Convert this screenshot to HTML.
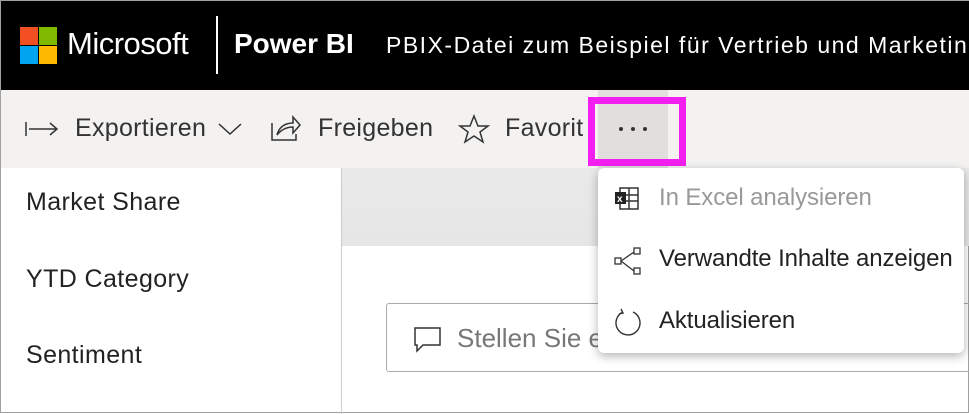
<!DOCTYPE html>
<html><head><style>
*{margin:0;padding:0;box-sizing:border-box}
body{width:969px;height:413px;position:relative;overflow:hidden;background:#fff;font-family:"Segoe UI","Liberation Sans",sans-serif;border:1px solid #a0a0a0}
.abs{position:absolute}
.hdr{left:0;top:0;width:969px;height:89px;background:#000}
.tb{left:0;top:89px;width:969px;height:78px;background:#f3f2f1}
.t{position:absolute;white-space:nowrap}
</style></head><body>
<div class="abs hdr"></div>
<div class="abs" style="left:19px;top:26px;width:18px;height:18px;background:#f25022"></div>
<div class="abs" style="left:38px;top:26px;width:18px;height:18px;background:#7fba00"></div>
<div class="abs" style="left:19px;top:45px;width:18px;height:18px;background:#00a4ef"></div>
<div class="abs" style="left:38px;top:45px;width:18px;height:18px;background:#ffb900"></div>
<div class="t" style="left:66px;top:25px;color:#fff;font-size:31px;letter-spacing:-0.5px">Microsoft</div>
<div class="abs" style="left:215px;top:15px;width:2px;height:58px;background:#fff"></div>
<div class="t" style="left:233px;top:27px;color:#fff;font-size:28px;font-weight:bold">Power BI</div>
<div class="t" style="left:385px;top:31px;color:#fff;font-size:23px;letter-spacing:1.5px">PBIX-Datei zum Beispiel für Vertrieb und Marketing</div>
<div class="abs tb"></div>
<div class="abs" style="left:597px;top:89px;width:70px;height:78px;background:#e1dfdd"></div>
<div class="abs" style="left:587px;top:96px;width:98px;height:69px;border:7px solid #f31ff0"></div>
<div class="abs" style="left:618px;top:126px;width:4px;height:4px;border-radius:2px;background:#333"></div>
<div class="abs" style="left:630px;top:126px;width:4px;height:4px;border-radius:2px;background:#333"></div>
<div class="abs" style="left:642px;top:126px;width:4px;height:4px;border-radius:2px;background:#333"></div>
<svg class="abs" style="left:24px;top:118px" width="36" height="20"><path d="M1 3v14M4 10h28M25 4l7 6-7 6" stroke="#333" stroke-width="1.5" fill="none"/></svg>
<div class="t" style="left:74px;top:113px;font-size:25px;color:#333;letter-spacing:0.3px">Exportieren</div>
<svg class="abs" style="left:216px;top:119px" width="26" height="16"><path d="M2 4l11 10 11-10" stroke="#333" stroke-width="1.5" fill="none"/></svg>
<svg class="abs" style="left:268px;top:112px" width="34" height="30"><path d="M3 10v17h24v-6M8 22c2-8 8-12 16-12v-6l7 8-7 8v-6c-7 0-12 3-16 8" stroke="#333" stroke-width="1.5" fill="none"/></svg>
<div class="t" style="left:317px;top:113px;font-size:25px;color:#333;letter-spacing:0.3px">Freigeben</div>
<svg class="abs" style="left:457px;top:113px" width="32" height="30"><path d="M16 2l4 10h10l-8 6 3 10-9-6-9 6 3-10-8-6h10z" stroke="#333" stroke-width="1.5" fill="none"/></svg>
<div class="t" style="left:504px;top:113px;font-size:25px;color:#333;letter-spacing:0.3px">Favorit</div>
<div class="abs" style="left:340px;top:167px;width:629px;height:78px;background:linear-gradient(#e9e9e9,#e6e6e6)"></div>
<div class="abs" style="left:340px;top:167px;width:1px;height:246px;background:#ccc"></div>
<div class="t" style="left:25px;top:187px;font-size:25px;color:#222;letter-spacing:0.4px">Market Share</div>
<div class="t" style="left:25px;top:264px;font-size:25px;color:#222;letter-spacing:0.4px">YTD Category</div>
<div class="t" style="left:25px;top:340px;font-size:25px;color:#222;letter-spacing:0.4px">Sentiment</div>
<div class="abs" style="left:385px;top:302px;width:600px;height:69px;border:1px solid #aaa;border-radius:3px"></div>
<svg class="abs" style="left:412px;top:325px" width="30" height="28"><path d="M2 2h25v17H10l-6 6v-6H2z" stroke="#333" stroke-width="1.5" fill="none"/></svg>
<div class="t" style="left:456px;top:322px;font-size:26px;color:#777">Stellen Sie eine Frage</div>
<div class="abs" style="left:597px;top:167px;width:366px;height:185px;background:#fff;border-radius:6px;box-shadow:0 3px 10px rgba(0,0,0,.3)"></div>
<svg class="abs" style="left:613px;top:185px" width="26" height="26"><rect x="6" y="2" width="18" height="21" fill="none" stroke="#333" stroke-width="1.5"/><path d="M6 9h18M6 15h18M15 2v21" stroke="#333" stroke-width="1.5"/><rect x="1" y="6" width="11" height="12" fill="#222"/><text x="3" y="16" font-size="10" fill="#fff" font-family="Liberation Sans" font-weight="bold">x</text></svg>
<div class="t" style="left:658px;top:183px;font-size:24px;color:#999;letter-spacing:-0.1px">In Excel analysieren</div>
<svg class="abs" style="left:613px;top:245px" width="28" height="30"><rect x="1" y="12" width="6" height="6" fill="none" stroke="#333" stroke-width="1.3"/><rect x="20" y="2" width="6" height="6" fill="none" stroke="#333" stroke-width="1.3"/><rect x="20" y="22" width="6" height="6" fill="none" stroke="#333" stroke-width="1.3"/><path d="M7 15L20 6M7 15L20 25" stroke="#333" stroke-width="1.3" fill="none"/></svg>
<div class="t" style="left:658px;top:244px;font-size:24px;color:#222;letter-spacing:-0.1px">Verwandte Inhalte anzeigen</div>
<svg class="abs" style="left:612px;top:306px" width="30" height="32"><path d="M10 5A12 12 0 1 0 20 5M8 2l2 4-4 1" stroke="#333" stroke-width="1.4" fill="none"/></svg>
<div class="t" style="left:658px;top:306px;font-size:24px;color:#222;letter-spacing:-0.1px">Aktualisieren</div>
</body></html>
